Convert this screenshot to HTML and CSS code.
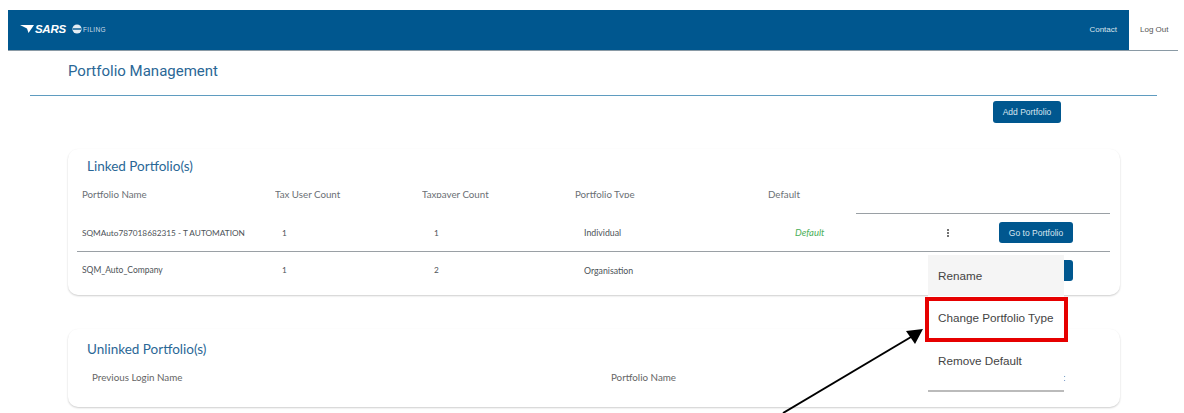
FILE: index.html
```html
<!DOCTYPE html>
<html lang="en">
<head>
<meta charset="utf-8">
<title>Portfolio Management</title>
<link rel="stylesheet" href="styles.css">
</head>
<body>
<header class="topbar">
  <div class="brand">
    <svg class="bird" width="14" height="8" viewBox="0 0 14 8"><path d="M0 0h14L8.5 8 7 3.5z" fill="#fff"/></svg>
    <span class="sars">SARS</span>
    <svg class="globe" width="10" height="10" viewBox="0 0 10 10"><circle cx="5" cy="5" r="4.6" fill="#e4edf3"/><path d="M.8 5h8.4" stroke="#00578f" stroke-width="1.4"/></svg>
    <span class="filing">FILING</span>
  </div>
  <nav class="nav">
    <span class="contact">Contact</span>
    <span class="logout">Log Out</span>
  </nav>
</header>

<h1 class="title">Portfolio Management</h1>
<hr class="rule">
<div class="addrow"><button class="btn btn-add">Add Portfolio</button></div>

<section class="card linked">
  <h2 class="card-title">Linked Portfolio(s)</h2>
  <div class="row row-head">
    <span>Portfolio Name</span><span>Tax User Count</span><span>Taxpayer Count</span><span>Portfolio Type</span><span class="head-default">Default</span><span class="head-line"></span>
  </div>
  <div class="row row-body ruled">
    <span>SQMAuto787018682315 - T AUTOMATION</span><span class="c2">1</span><span class="c3">1</span><span class="c4">Individual</span><span class="c5 is-default">Default</span>
    <span class="actions"><span class="dots"><i></i><i></i><i></i></span><button class="btn btn-go">Go to Portfolio</button></span>
  </div>
  <div class="row row-body row-last">
    <span class="company">SQM_Auto_Company</span><span class="c2">1</span><span class="c3">2</span><span class="c4">Organisation</span><span class="c5"></span>
    <span class="actions"><span class="dots"></span><button class="btn btn-go">Go to Portfolio</button></span>
  </div>
</section>

<section class="card unlinked">
  <h2 class="card-title">Unlinked Portfolio(s)</h2>
  <div class="row-unlinked">
    <span>Previous Login Name</span><span>Portfolio Name</span><span class="hidden-col">Default</span>
  </div>
</section>

<ul class="menu">
  <li class="active">Rename</li>
  <li>Change Portfolio Type</li>
  <li>Remove Default</li>
</ul>
<div class="highlight"></div>
<svg class="arrow" width="160" height="100" viewBox="0 0 160 100">
  <path d="M10 93 138 17" stroke="#000" stroke-width="2" fill="none"/>
  <path d="M150 9 133 11 142 24z" fill="#000"/>
</svg>
</body>
</html>
```
FILE: styles.css
```css
* { box-sizing: border-box; }
html, body { margin: 0; padding: 0; }
body {
  position: relative;
  width: 1184px;
  height: 413px;
  overflow: hidden;
  background: #fff;
  padding-top: 10px;
  font-family: "Lato", "Open Sans", sans-serif;
  color: #4d5358;
}
.topbar {
  display: flex;
  justify-content: space-between;
  height: 41px;
  margin: 0 6px 0 8px;
  background: #00578f;
  border-bottom: 1px solid #8a9aa5;
}
.brand { display: flex; align-items: center; padding: 0 0 2px 12px; color: #fff; }
.bird { margin-right: 1px; }
.sars { font: italic 700 11.5px "Liberation Sans", sans-serif; letter-spacing: -.3px; width: 29px; }
.globe { margin-left: 8px; }
.filing { font: 6.5px "Liberation Sans", sans-serif; margin-left: 1px; color: #cfdde7; letter-spacing: .3px; }
.nav { display: flex; align-items: stretch; font: 8px "Liberation Sans", sans-serif; }
.contact { color: #d9e4ec; padding: 15px 12px 0 0; }
.logout { width: 49px; background: #fff; color: #555; padding: 15px 0 0 11px; }
.title {
  margin: 0;
  padding: 10px 0 0 68px;
  height: 44px;
  font: 400 15px/20px "Roboto", sans-serif;
  color: #2a6796;
}
.rule { margin: 0 27px 0 30px; border: 0; border-top: 1px solid #5f9cc0; height: 1px; }
.addrow { display: flex; justify-content: flex-end; padding: 5px 123px 0 0; }
.btn {
  border: 0;
  border-radius: 3px;
  background: #00578f;
  color: #d9e6ef;
  font: 8.5px "Liberation Sans", sans-serif;
  padding: 0;
}
.btn-add { width: 68px; height: 22px; }
.card {
  margin: 0 64px 0 68px;
  background: #fff;
  border-radius: 10px;
  box-shadow: 0 1px 2px rgba(0,0,0,.2);
}
.linked { margin-top: 26px; height: 146px; padding: 7px 10px 0 9px; }
.card-title { margin: 0; font: 400 13.5px/20px "Lato", sans-serif; color: #2a6796; padding-left: 10px; }
.row {
  display: grid;
  grid-template-columns: 198px 147px 153px 179px 102px 254px;
  font-size: 8.25px;
}
.row > span:first-child { padding-left: 5px; }
.row > .company { font-size: 8.5px; }
.row-head { height: 27px; margin-top: 11px; color: #6b7075; font-size: 9.75px; line-height: 13px; }
.row-head > span { height: 11px; overflow: hidden; padding-top: 1px; }
.row-head > .head-line { height: 27px; border-bottom: 1px solid #9aa0a5; padding: 0; }
.head-default { padding-left: 14px; }
.row-body { height: 38px; align-items: center; }
.row-last { height: 36px; }
.ruled { border-bottom: 1px solid #9aa0a5; }
.c2 { padding-left: 7px; }
.c3 { padding-left: 12px; }
.c4 { padding-left: 9px; font-size: 8.75px; }
.c5 { padding-left: 41px; }
.is-default { color: #4cb05a; font-style: italic; font-size: 9.5px; }
.actions { display: flex; align-items: center; }
.dots { display: flex; flex-direction: column; gap: 1px; width: 143px; padding-left: 91px; }
.dots i { width: 2px; height: 2px; background: #444; border-radius: 50%; }
.btn-go { width: 74px; height: 21px; }
.unlinked { margin-top: 34px; height: 78px; padding: 10px 0 0 19px; }
.unlinked .card-title { padding-left: 0; }
.row-unlinked {
  display: grid;
  grid-template-columns: 519px 1fr auto;
  padding: 12px 55px 0 5px;
  font-size: 9.8px;
  color: #666;
}
.menu {
  position: absolute;
  left: 928px;
  top: 255px;
  width: 136px;
  height: 137px;
  margin: 0;
  padding: 0;
  list-style: none;
  background: #fff;
  border-bottom: 2px solid #bbb;
  font: 11.7px/42px "Liberation Sans", sans-serif;
  color: #444;
}
.menu li { height: 43px; padding-left: 10px; white-space: nowrap; }
.menu .active { height: 41px; background: #f5f5f5; }
.menu li:nth-child(2), .menu li:nth-child(3) { line-height: 44px; }
.highlight {
  position: absolute;
  left: 925px;
  top: 297px;
  width: 143px;
  height: 45px;
  border: 4px solid #e60000;
}
.arrow { position: absolute; left: 773px; top: 320px; }
```
